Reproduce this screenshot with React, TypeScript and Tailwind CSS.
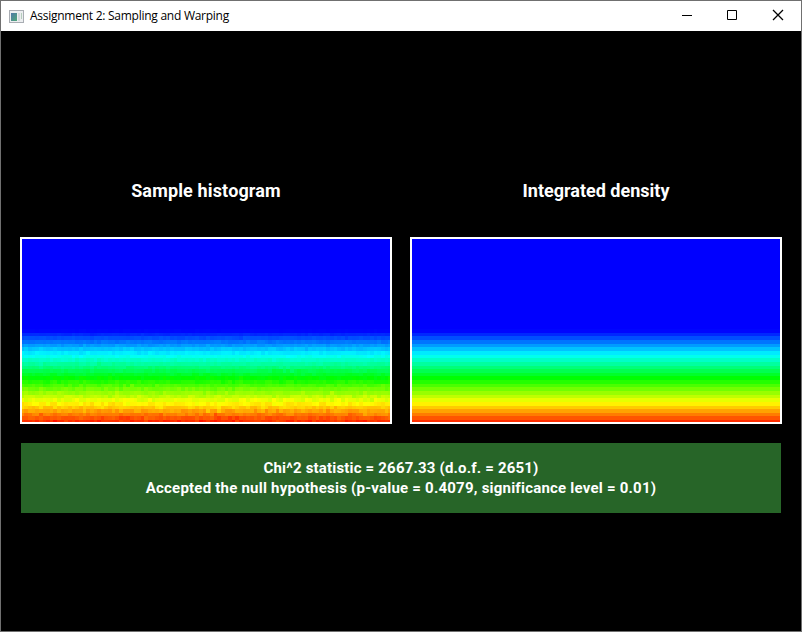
const COLS = 102;
const ROWS = 51;
const CELL = 3.64;

function clamp(v: number) {
  return Math.max(0, Math.min(1, v));
}

function heat(v: number) {
  const t = clamp(v) * 4;
  const r = Math.round(clamp(t - 2) * 255);
  const g = Math.round(clamp(Math.min(t, 4 - t)) * 255);
  const b = Math.round(clamp(2 - t) * 255);
  return `rgb(${r},${g},${b})`;
}

function makeRandom(seed: number) {
  let s = seed;
  return () => {
    s = (s * 1664525 + 1013904223) % 4294967296;
    return (s + 1) / 4294967297;
  };
}

const density = Array.from({ length: ROWS }, (_, i) =>
  i < 25 ? 0 : i === 25 ? 0.005 : ((i - 25) / 25) * 0.955
);

const random = makeRandom(2651);
const histogram = density.map((d) =>
  Array.from({ length: COLS }, () => {
    const n = Math.sqrt(-2 * Math.log(random())) * Math.cos(2 * Math.PI * random());
    return d + n * 0.0135 * Math.sqrt(d);
  })
);

function Plot({ noisy }: { noisy?: boolean }) {
  return (
    <div className="h-[187px] w-[372px] border-2 border-white">
      <svg width="368" height="183" viewBox="2 2 368 183" shapeRendering="crispEdges" className="block bg-[#0000ff]">
        {density.map((d, i) =>
          i < 25 ? null : noisy ? (
            histogram[i].map((v, j) => (
              <rect key={`${i}-${j}`} x={0.7 + j * CELL} y={1.1 + i * CELL} width={CELL} height={CELL} fill={heat(v)} />
            ))
          ) : (
            <rect key={i} x="0" y={1.1 + i * CELL} width="372" height={CELL} fill={heat(d)} />
          )
        )}
      </svg>
    </div>
  );
}

function AppIcon() {
  return (
    <svg width="15" height="13" viewBox="0 0 15 13" shapeRendering="crispEdges">
      <defs>
        <linearGradient id="screen" x1="0" y1="0" x2="1" y2="1">
          <stop offset="0" stopColor="#4f78a8" />
          <stop offset="1" stopColor="#4fa878" />
        </linearGradient>
      </defs>
      <rect width="15" height="13" fill="#a9adb3" />
      <rect x="1" y="1" width="13" height="11" fill="#eceef0" />
      <rect x="2" y="3" width="6" height="8" fill="url(#screen)" />
      <rect x="9" y="3" width="2" height="8" fill="#d5dadd" />
      <rect x="12" y="3" width="1" height="6" fill="#b5cdbc" />
    </svg>
  );
}

export default function App() {
  return (
    <div className="flex h-[632px] w-[802px] flex-col border border-[#707070] bg-black font-['Roboto','Liberation_Sans',sans-serif] text-white">
      <header className="flex h-[30px] items-center justify-between bg-white text-black">
        <div className="flex items-center gap-[6px] pl-2">
          <AppIcon />
          <h1 className="whitespace-nowrap font-['Open_Sans','Noto_Sans',sans-serif] text-[12px] leading-[16px] tracking-[-0.26px]">
            Assignment 2: Sampling and Warping
          </h1>
        </div>
        <svg width="138" height="30" viewBox="0 0 138 30" fill="none" stroke="black">
          <path d="M19 14.5h10" />
          <path d="M64.5 9.5h9v9h-9z" />
          <path d="M110 9l10 10M120 9l-10 10" strokeWidth="1.3" />
        </svg>
      </header>
      <main className="flex flex-col pt-[148px]">
        <div className="flex gap-[18px] pl-[19px] text-center text-[18px] font-bold leading-[24px]">
          <h2 className="w-[372px] tracking-[0.15px]">Sample histogram</h2>
          <h2 className="w-[372px]">Integrated density</h2>
        </div>
        <div className="mt-[34px] flex gap-[18px] pl-[19px]">
          <Plot noisy />
          <Plot />
        </div>
        <div className="ml-5 mt-[19px] flex h-[70px] w-[760px] flex-col items-center justify-center bg-[#276528] text-[15px] font-bold leading-[20px]">
          <p className="tracking-[0.18px]">Chi^2 statistic = 2667.33 (d.o.f. = 2651)</p>
          <p className="tracking-[0.22px]">Accepted the null hypothesis (p-value = 0.4079, significance level = 0.01)</p>
        </div>
      </main>
    </div>
  );
}
